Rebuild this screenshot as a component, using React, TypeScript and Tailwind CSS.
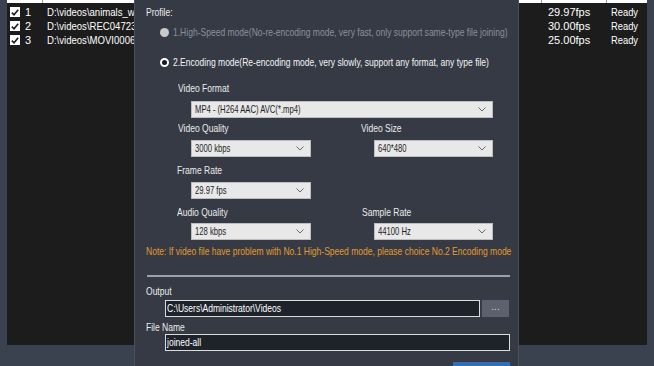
import React from 'react';

const FONT = { fontFamily: '"Liberation Sans", Arial, sans-serif' };

// only the part of each path that shows left of the dialog
const ROWS = [
  { n: 1, path: 'D:\\videos\\animals_w', fps: '29.97fps' },
  { n: 2, path: 'D:\\videos\\REC04723', fps: '30.00fps' },
  { n: 3, path: 'D:\\videos\\MOVI0006', fps: '25.00fps' },
];

// the dialog text is a narrow face; squeeze Liberation Sans to its width
function T({ children, narrow }: { children: React.ReactNode; narrow?: boolean }) {
  return (
    <span className={`inline-block whitespace-nowrap origin-left ${narrow ? 'scale-x-[0.73]' : 'scale-x-[0.775]'}`}>
      {children}
    </span>
  );
}

function Chevron() {
  return (
    <svg width="8" height="5" viewBox="0 0 8 5" className="shrink-0">
      <path d="M0.5 0.5 L4 4 L7.5 0.5" fill="none" stroke="#6b6b6b" strokeWidth="1" />
    </svg>
  );
}

function Select({ value, w }: { value: string; w: string }) {
  return (
    <div className={`${w} h-[17px] bg-[#e8e8e8] border border-[#bdbdbd] flex items-center justify-between pl-[3px] pr-[6px] text-[10.5px] text-[#1d1d1d]`}>
      <span className="w-0 overflow-visible">
        <T narrow>{value}</T>
      </span>
      <Chevron />
    </div>
  );
}

function Label({ children, cls }: { children: React.ReactNode; cls: string }) {
  return (
    <div className={`${cls} h-[14px] leading-[14px] text-[11px] text-[#ececec]`}>
      <T>{children}</T>
    </div>
  );
}

export default function App() {
  return (
    <div className="relative w-[654px] h-[366px] overflow-hidden bg-[#3a414f]" style={FONT}>
      {/* file list behind the dialog */}
      <div className="mx-[7px] h-[345px] bg-[#1c1c1c]">
        <div className="h-[3px] bg-white flex">
          <div className="w-[36px] border-r border-[#9a9a9a]" />
          <div className="w-[499px] border-r border-[#9a9a9a]" />
          <div className="w-[65px] border-r border-[#9a9a9a]" />
        </div>
        <div className="pt-[2px]">
          {ROWS.map((r) => (
            <div key={r.n} className="h-[14px] flex items-center text-[11px] text-white">
              <div className="ml-[3px] w-[10px] h-[10px] bg-white flex items-center justify-center">
                <svg width="8" height="7" viewBox="0 0 8 7">
                  <path d="M0.8 3.6 L3 5.8 L7.2 0.8" fill="none" stroke="#1c1c1c" strokeWidth="1.6" />
                </svg>
              </div>
              <span className="ml-[5px] w-[22px]">{r.n}</span>
              <span className="w-[501px]">
                <span className="inline-block whitespace-nowrap origin-left scale-x-[0.87]">{r.path}</span>
              </span>
              <span className="w-[63px]">{r.fps}</span>
              <span className="inline-block origin-left scale-x-[0.85]">Ready</span>
            </div>
          ))}
        </div>
      </div>

      {/* dialog overlay */}
      <div className="absolute left-[134px] top-0 w-[385px] h-[366px] bg-[#353a45] border-x border-[#4a515e]">
        <div className="flex flex-col">
          <Label cls="pl-[11px] mt-[5px]">Profile:</Label>

          <div className="mt-[6px] h-[14px] flex items-center pl-[25px] text-[11px] text-[#8c9199]">
            <div className="w-[9px] h-[9px] rounded-full bg-[#c9c9c9] shrink-0" />
            <span className="ml-[4px]">
              <T>1.High-Speed mode(No-re-encoding mode, very fast, only support same-type file joining)</T>
            </span>
          </div>

          <div className="mt-[16px] h-[14px] flex items-center pl-[25px] text-[11px] text-[#f4f4f4]">
            <div className="w-[9px] h-[9px] rounded-full border-2 border-white bg-[#1a1a1a] shrink-0" />
            <span className="ml-[4px]">
              <T>2.Encoding mode(Re-encoding mode, very slowly, support any format, any type file)</T>
            </span>
          </div>

          <Label cls="pl-[43px] mt-[12px]">Video Format</Label>
          <div className="mt-[6px] pl-[56px]">
            <Select value="MP4 - (H264 AAC) AVC(*.mp4)" w="w-[302px]" />
          </div>

          <div className="flex mt-[3px]">
            <Label cls="pl-[43px] w-[226px]">Video Quality</Label>
            <Label cls="">Video Size</Label>
          </div>
          <div className="flex mt-[5px]">
            <div className="pl-[56px] w-[239px]">
              <Select value="3000 kbps" w="w-[120px]" />
            </div>
            <Select value="640*480" w="w-[119px]" />
          </div>

          <Label cls="pl-[42px] mt-[6px]">Frame Rate</Label>
          <div className="mt-[5px] pl-[56px]">
            <Select value="29.97 fps" w="w-[120px]" />
          </div>

          <div className="flex mt-[6px]">
            <Label cls="pl-[42px] w-[227px]">Audio Quality</Label>
            <Label cls="">Sample Rate</Label>
          </div>
          <div className="flex mt-[4px]">
            <div className="pl-[56px] w-[239px]">
              <Select value="128 kbps" w="w-[120px]" />
            </div>
            <Select value="44100 Hz" w="w-[119px]" />
          </div>

          <div className="mt-[4px] h-[14px] leading-[14px] pl-[11px] text-[11px] text-[#e39a2a]">
            <T>Note: If video file have problem with No.1 High-Speed mode, please choice No.2 Encoding mode</T>
          </div>

          <div className="mt-[17px] ml-[12px] w-[363px] h-[2px] bg-[#9ca1aa]" />

          <Label cls="pl-[11px] mt-[7px]">Output</Label>
          <div className="mt-[2px] pl-[30px] flex gap-[2px]">
            <div className="w-[315px] h-[17px] bg-[#1e222a] border border-[#dcdcdc] flex items-center pl-[1px] text-[11px] text-white">
              <T>C:\Users\Administrator\Videos</T>
            </div>
            <div className="w-[27px] h-[17px] bg-[#5b616e] flex items-center justify-center text-[10px] leading-none text-[#d8d8d8] pb-[3px]">
              ...
            </div>
          </div>

          <Label cls="pl-[11px] mt-[3px]">File Name</Label>
          <div className="pl-[30px]">
            <div className="w-[345px] h-[17px] bg-[#1e222a] border border-[#dcdcdc] flex items-center pl-[1px] text-[11px] text-white">
              <T>joined-all</T>
            </div>
          </div>

          <div className="mt-[11px] ml-[318px] w-[57px] h-[10px] bg-[#2f6fba]" />
        </div>
      </div>
    </div>
  );
}
